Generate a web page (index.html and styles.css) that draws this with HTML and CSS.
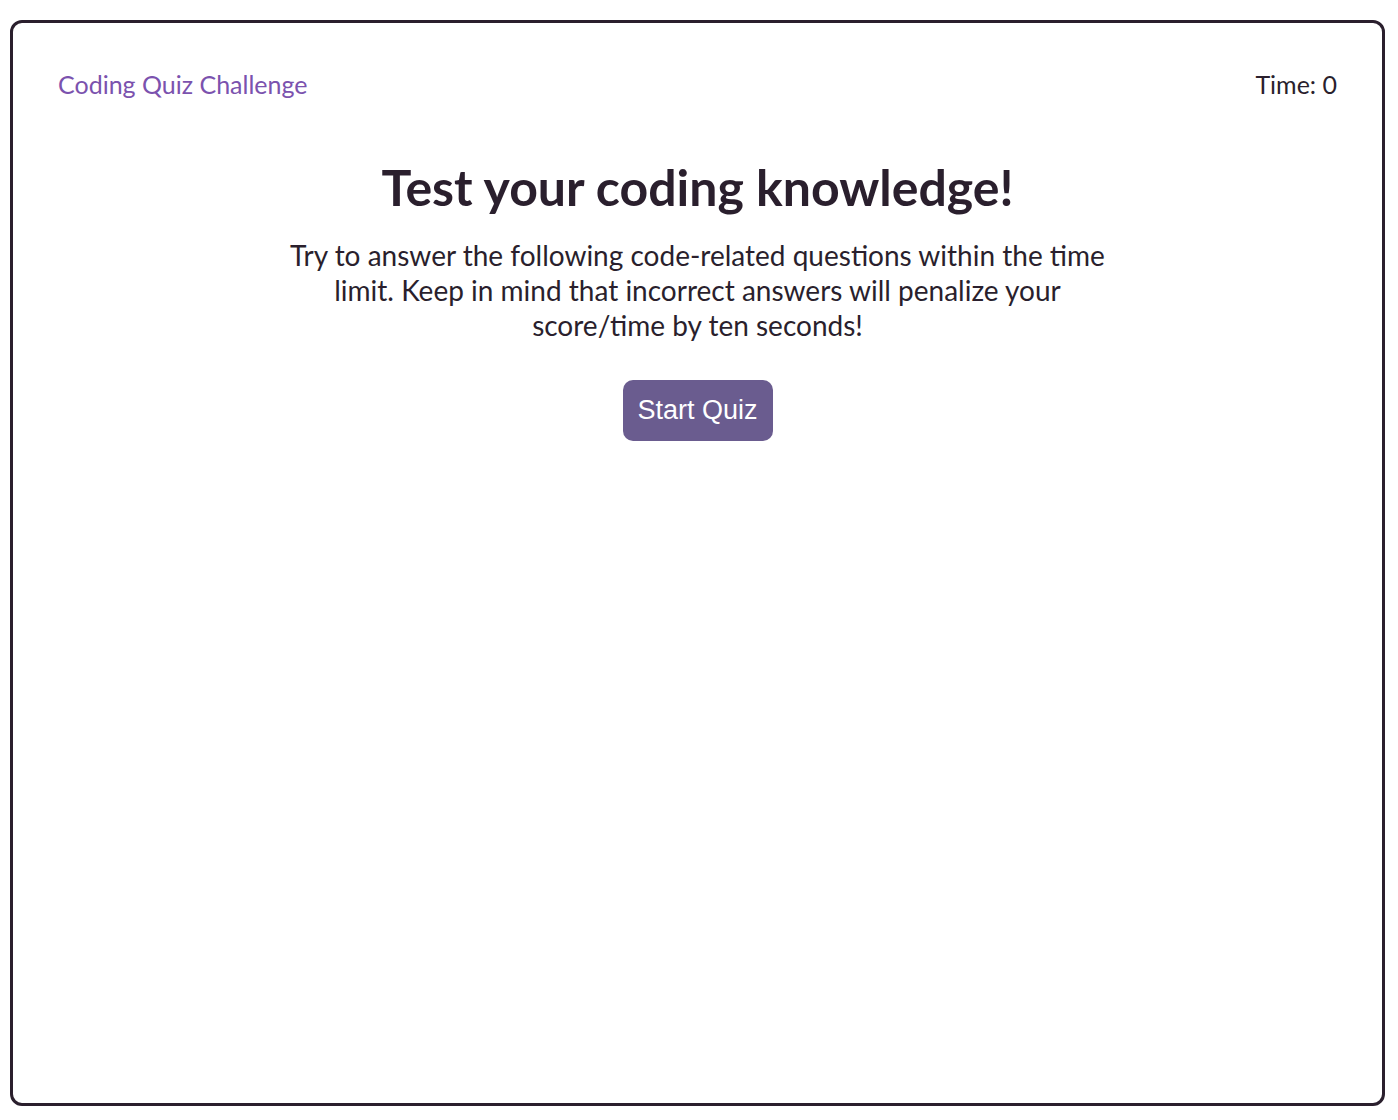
FILE: index.html
```html
<!DOCTYPE html>
<html lang="en">
<head>
<meta charset="utf-8">
<title>Coding Quiz Challenge</title>
<link rel="stylesheet" href="styles.css">
</head>
<body>
<div class="frame">
  <header class="topbar">
    <span class="brand">Coding Quiz Challenge</span>
    <span class="timer">Time: 0</span>
  </header>
  <main class="intro">
    <h1 class="title">Test your coding knowledge!</h1>
    <p class="lead">Try to answer the following code-related questions within the time limit. Keep in mind that incorrect answers will penalize your score/time by ten seconds!</p>
    <button class="start">Start Quiz</button>
  </main>
</div>
</body>
</html>
```
FILE: styles.css
```css
html, body {
  margin: 0;
  padding: 0;
  background: #ffffff;
}
body {
  padding: 20px 13px 14px 10px;
  font-family: Lato, "Open Sans", sans-serif;
  color: #2a1f2d;
}
.frame {
  box-sizing: border-box;
  height: 1086px;
  border: 3px solid #2a1f2d;
  border-radius: 12px;
  padding: 43px 45px 0 45px;
}
.topbar {
  display: flex;
  justify-content: space-between;
  align-items: baseline;
  font-size: 25px;
  line-height: 36px;
}
.brand {
  color: #7b52ae;
}
.timer {
  color: #2a1f2d;
}
.intro {
  display: flex;
  flex-direction: column;
  align-items: center;
  text-align: center;
}
.title {
  margin: 55px 0 0 0;
  font-size: 50px;
  font-weight: 700;
  line-height: 60px;
}
.lead {
  margin: 21px 0 0 0;
  max-width: 830px;
  font-size: 28px;
  line-height: 35px;
}
.start {
  margin-top: 37px;
  width: 150px;
  height: 61px;
  border: none;
  border-radius: 10px;
  background: #6a5c8f;
  color: #ffffff;
  font-family: "Liberation Sans", Arial, sans-serif;
  font-size: 27px;
  padding: 0;
}
```
